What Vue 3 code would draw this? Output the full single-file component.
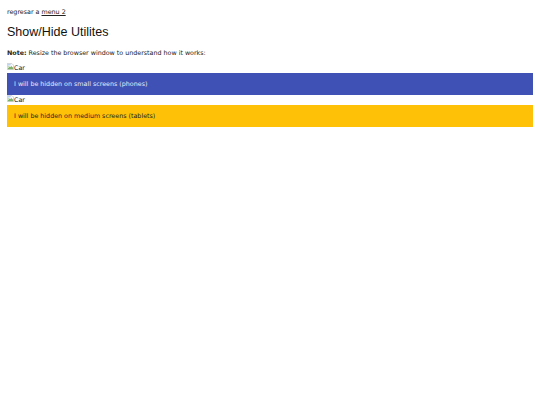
<script setup>
const panels = [
  { text: 'I will be hidden on small screens (phones)', tone: 'indigo' },
  { text: 'I will be hidden on medium screens (tablets)', tone: 'amber' }
]
</script>

<template>
  <main class="page">
    <p class="back">regresar a <a href="#">menu 2</a></p>
    <h2>Show/Hide Utilites</h2>
    <p class="note"><b>Note:</b> Resize the browser window to understand how it works:</p>
    <section v-for="p in panels" :key="p.tone" class="block">
      <div class="car">
        <svg class="broken" viewBox="0 0 16 16" width="7" height="7" aria-hidden="true">
          <path d="M1 1h10l4 4v10H1z" fill="#fff" stroke="#9a9a9a" />
          <path d="M2 14V9l3-3 3 3 2-2 4 4v3z" fill="#7fb26a" />
          <path d="M2 2h8v4H2z" fill="#bcd3f2" />
          <path d="M1 12L12 1" stroke="#fff" stroke-width="2" />
        </svg><span class="alt">Car</span>
      </div>
      <div class="panel" :class="p.tone">{{ p.text }}</div>
    </section>
  </main>
</template>

<style scoped>
.page {
  box-sizing: border-box;
  width: 540px;
  height: 405px;
  padding: 7px;
  background: #fff;
  color: #222;
  font-family: "DejaVu Sans", Verdana, sans-serif;
  font-size: 6.35px;
  line-height: 9px;
}
.back {
  margin: 0;
}
a {
  color: #222;
  text-decoration: underline;
}
h2 {
  margin: 7px 0 0;
  color: #111;
  font-family: "Liberation Sans", Arial, sans-serif;
  font-size: 12.5px;
  font-weight: 400;
  line-height: 18px;
}
.note {
  margin: 7px 0 6px;
}
.car {
  display: flex;
  align-items: flex-start;
  height: 10px;
  line-height: 10px;
}
.alt {
  font-family: "DejaVu Sans", Verdana, sans-serif;
  font-size: 6.35px;
}
.broken {
  flex: none;
}
.panel {
  height: 22px;
  padding-left: 7px;
  line-height: 22px;
}
.indigo {
  background: #3f51b5;
  color: #e8eaf6;
}
.amber {
  background: #ffc107;
  color: #222;
}
</style>
